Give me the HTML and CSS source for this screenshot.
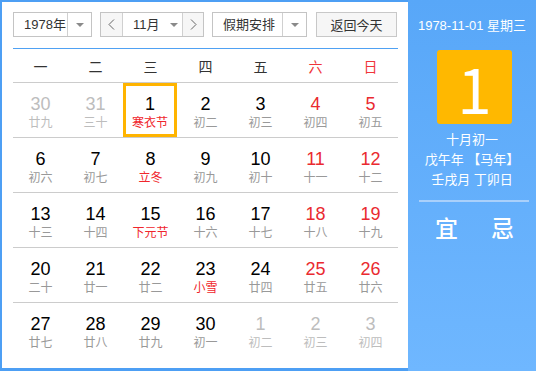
FILE: index.html
```html
<!DOCTYPE html>
<html lang="zh-CN">
<head>
    <meta charset="UTF-8">
    <title>万年历</title>
    <link rel="stylesheet" href="styles.css">
</head>
<body>
    <div class="calendar">
        <div class="main">
            <div class="toolbar">
                <div class="select year">
                    <span class="select-text">1978年</span>
                    <span class="select-arrow"></span>
                </div>
                <div class="month-group">
                    <span class="nav prev">
                        <svg width="7" height="11" viewBox="0 0 7 11"><polyline points="6,0.5 1,5.5 6,10.5" fill="none" stroke="#666" stroke-width="1"/></svg>
                    </span>
                    <span class="month-select">
                        <span class="month-text">11月</span>
                        <span class="arrow"></span>
                    </span>
                    <span class="nav next">
                        <svg width="7" height="11" viewBox="0 0 7 11"><polyline points="1,0.5 6,5.5 1,10.5" fill="none" stroke="#666" stroke-width="1"/></svg>
                    </span>
                </div>
                <div class="select holiday">
                    <span class="select-text">假期安排</span>
                    <span class="select-arrow"></span>
                </div>
                <button class="today-btn">返回今天</button>
            </div>

            <div class="weekdays">
                <span>一</span><span>二</span><span>三</span><span>四</span><span>五</span>
                <span class="weekend">六</span><span class="weekend">日</span>
            </div>

            <div class="week">
                <div class="day other"><b>30</b><i>廿九</i></div>
                <div class="day other"><b>31</b><i>三十</i></div>
                <div class="day today"><b>1</b><i class="fest">寒衣节</i></div>
                <div class="day"><b>2</b><i>初二</i></div>
                <div class="day"><b>3</b><i>初三</i></div>
                <div class="day weekend"><b>4</b><i>初四</i></div>
                <div class="day weekend"><b>5</b><i>初五</i></div>
            </div>
            <div class="week">
                <div class="day"><b>6</b><i>初六</i></div>
                <div class="day"><b>7</b><i>初七</i></div>
                <div class="day"><b>8</b><i class="fest">立冬</i></div>
                <div class="day"><b>9</b><i>初九</i></div>
                <div class="day"><b>10</b><i>初十</i></div>
                <div class="day weekend"><b>11</b><i>十一</i></div>
                <div class="day weekend"><b>12</b><i>十二</i></div>
            </div>
            <div class="week">
                <div class="day"><b>13</b><i>十三</i></div>
                <div class="day"><b>14</b><i>十四</i></div>
                <div class="day"><b>15</b><i class="fest">下元节</i></div>
                <div class="day"><b>16</b><i>十六</i></div>
                <div class="day"><b>17</b><i>十七</i></div>
                <div class="day weekend"><b>18</b><i>十八</i></div>
                <div class="day weekend"><b>19</b><i>十九</i></div>
            </div>
            <div class="week">
                <div class="day"><b>20</b><i>二十</i></div>
                <div class="day"><b>21</b><i>廿一</i></div>
                <div class="day"><b>22</b><i>廿二</i></div>
                <div class="day"><b>23</b><i class="fest">小雪</i></div>
                <div class="day"><b>24</b><i>廿四</i></div>
                <div class="day weekend"><b>25</b><i>廿五</i></div>
                <div class="day weekend"><b>26</b><i>廿六</i></div>
            </div>
            <div class="week">
                <div class="day"><b>27</b><i>廿七</i></div>
                <div class="day"><b>28</b><i>廿八</i></div>
                <div class="day"><b>29</b><i>廿九</i></div>
                <div class="day"><b>30</b><i>初一</i></div>
                <div class="day other"><b>1</b><i>初二</i></div>
                <div class="day other"><b>2</b><i>初三</i></div>
                <div class="day other"><b>3</b><i>初四</i></div>
            </div>
        </div>

        <div class="side">
            <div class="side-date">1978-11-01 星期三</div>
            <div class="big-day">1</div>
            <div class="lunar-info">
                <p>十月初一</p>
                <p>戊午年 【马年】</p>
                <p>壬戌月 丁卯日</p>
            </div>
            <div class="side-line"></div>
            <div class="yi-ji">
                <span>宜</span>
                <span>忌</span>
            </div>
        </div>
    </div>
</body>
</html>
```

FILE: styles.css
```css
* {
    margin: 0;
    padding: 0;
    box-sizing: border-box;
}

body {
    font-family: "Liberation Sans", "Noto Sans CJK SC", sans-serif;
    font-size: 13px;
    color: #333;
    background: #fff;
}

.calendar {
    display: flex;
    width: 536px;
    height: 371px;
}

.main {
    width: 408px;
    height: 371px;
    background: #fff;
    border: 2px solid #4d9ff4;
    border-right: 0;
    border-bottom-width: 3px;
    padding: 10px 10px 0 11px;
}

/* toolbar */
.toolbar {
    display: flex;
    height: 25px;
}

.select {
    display: flex;
    height: 25px;
    border: 1px solid #c4c4c4;
    background: #fff;
}

.year {
    width: 79px;
}

.holiday {
    width: 95px;
    margin-left: 8px;
}

.select-text {
    flex: 1;
    padding-left: 10px;
    line-height: 23px;
    color: #333;
}

.select-arrow {
    width: 24px;
    border-left: 1px solid #d0d0d0;
    display: flex;
    align-items: center;
    justify-content: center;
}

.select-arrow::after,
.arrow::after {
    content: "";
    border-left: 4px solid transparent;
    border-right: 4px solid transparent;
    border-top: 4px solid #8a8a8a;
}

.month-group {
    display: flex;
    width: 104px;
    height: 25px;
    margin-left: 8px;
    border: 1px solid #c4c4c4;
}

.nav {
    display: flex;
    align-items: center;
    justify-content: center;
    background: #f6f6f6;
}

.prev {
    width: 22px;
    border-right: 1px solid #d0d0d0;
}

.next {
    width: 21px;
    border-left: 1px solid #d0d0d0;
}

.month-select {
    flex: 1;
    display: flex;
    align-items: center;
    padding-left: 10px;
}

.month-text {
    line-height: 23px;
}

.arrow {
    display: flex;
    margin-left: 10px;
}

.today-btn {
    width: 81px;
    height: 25px;
    margin-left: 9px;
    border: 1px solid #c8c8c8;
    background: #f6f6f6;
    font-family: inherit;
    font-size: 13px;
    color: #333;
}

/* grid */
.weekdays {
    display: grid;
    grid-template-columns: repeat(7, 55px);
    margin-top: 11px;
    border-top: 1px solid #4fa1f3;
    border-bottom: 1px solid #cccccc;
    height: 35px;
    padding-top: 3px;
    line-height: 30px;
    text-align: center;
    font-size: 14px;
    color: #333;
}

.weekdays .weekend {
    color: #f0353a;
}

.week {
    display: grid;
    grid-template-columns: repeat(7, 55px);
    height: 55px;
    border-bottom: 1px solid #cccccc;
}

.week:last-child {
    border-bottom: 0;
}

.day {
    padding-top: 10px;
    text-align: center;
}

.day b {
    display: block;
    font-weight: normal;
    font-size: 18px;
    line-height: 22px;
    color: #000;
}

.day i {
    display: block;
    font-style: normal;
    font-size: 12px;
    line-height: 16px;
    color: #999;
}

.day.weekend b {
    color: #ea2a30;
}

.day i.fest {
    color: #f0262c;
}

.day.other b,
.day.other i {
    color: #bdbdbd;
}

.today {
    margin-right: 1px;
    box-shadow: inset 0 0 0 3px #ffb400;
}

/* side panel */
.side {
    flex: 1;
    height: 371px;
    background: linear-gradient(#58a7f8, #6fb7ff);
    color: #fff;
    padding-top: 17px;
}

.side-date {
    text-align: center;
    line-height: 18px;
}

.big-day {
    width: 75px;
    height: 74px;
    margin: 15px 0 0 29px;
    background: #ffb800;
    border-radius: 3px;
    text-align: center;
    font-family: "Noto Sans CJK SC", sans-serif;
    font-weight: 400;
    font-size: 62px;
    line-height: 74px;
    color: #fff;
}

.lunar-info {
    margin-top: 6px;
    text-align: center;
    line-height: 20px;
}

.side-line {
    width: 110px;
    height: 2px;
    margin: 10px 0 0 11px;
    background: #a9d0fb;
}

.yi-ji {
    display: flex;
    margin: 12px 0 0 27px;
    font-size: 23px;
    font-weight: 500;
    line-height: 30px;
}

.yi-ji span + span {
    margin-left: 33px;
}
```
